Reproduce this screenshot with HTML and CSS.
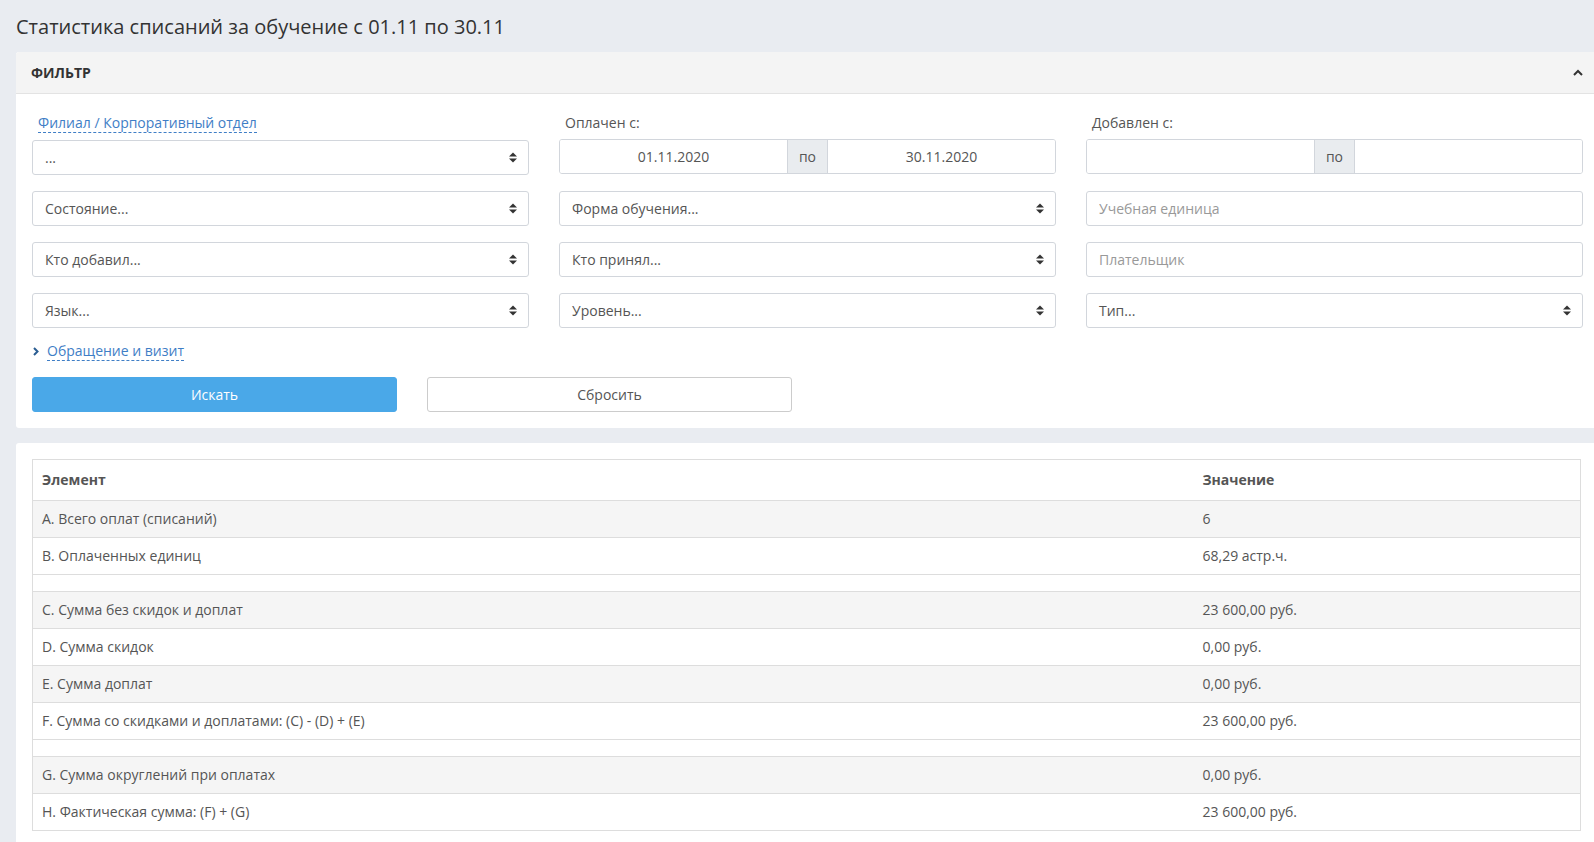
FILE: index.html
```html
<!DOCTYPE html>
<html lang="ru">

<head>
    <meta charset="UTF-8">
    <meta name="viewport" content="width=device-width, initial-scale=1.0">
    <title>Статистика списаний</title>
    <link rel="stylesheet" href="styles.css">
</head>

<body>
    <div class="page">
        <h1 class="page-title">Статистика списаний за обучение с 01.11 по 30.11</h1>

        <div class="panel">
            <div class="panel-heading">
                <span>ФИЛЬТР</span>
                <svg class="collapse-icon" width="10" height="7" viewBox="0 0 10 7">
                    <path d="M1 6 L5 2 L9 6" fill="none" stroke="#333" stroke-width="2"/>
                </svg>
            </div>
            <div class="panel-body">
                <div class="filter-grid">
                    <div class="field">
                        <a class="dashed-link">Филиал / Корпоративный отдел</a>
                        <div class="select">
                            <span>...</span>
                            <svg class="arrows" width="8" height="11" viewBox="0 0 8 11"><path d="M0 4.5 L4 0.5 L8 4.5 Z M0 6.5 L4 10.5 L8 6.5 Z" fill="#333"/></svg>
                        </div>
                    </div>
                    <div class="field">
                        <label>Оплачен с:</label>
                        <div class="input-group">
                            <input class="date" type="text" value="01.11.2020">
                            <span class="addon">по</span>
                            <input class="date" type="text" value="30.11.2020">
                        </div>
                    </div>
                    <div class="field">
                        <label>Добавлен с:</label>
                        <div class="input-group">
                            <input class="date" type="text">
                            <span class="addon">по</span>
                            <input class="date" type="text">
                        </div>
                    </div>

                    <div class="select">
                        <span>Состояние...</span>
                        <svg class="arrows" width="8" height="11" viewBox="0 0 8 11"><path d="M0 4.5 L4 0.5 L8 4.5 Z M0 6.5 L4 10.5 L8 6.5 Z" fill="#333"/></svg>
                    </div>
                    <div class="select">
                        <span>Форма обучения...</span>
                        <svg class="arrows" width="8" height="11" viewBox="0 0 8 11"><path d="M0 4.5 L4 0.5 L8 4.5 Z M0 6.5 L4 10.5 L8 6.5 Z" fill="#333"/></svg>
                    </div>
                    <input class="text-input" type="text" placeholder="Учебная единица">

                    <div class="select">
                        <span>Кто добавил...</span>
                        <svg class="arrows" width="8" height="11" viewBox="0 0 8 11"><path d="M0 4.5 L4 0.5 L8 4.5 Z M0 6.5 L4 10.5 L8 6.5 Z" fill="#333"/></svg>
                    </div>
                    <div class="select">
                        <span>Кто принял...</span>
                        <svg class="arrows" width="8" height="11" viewBox="0 0 8 11"><path d="M0 4.5 L4 0.5 L8 4.5 Z M0 6.5 L4 10.5 L8 6.5 Z" fill="#333"/></svg>
                    </div>
                    <input class="text-input" type="text" placeholder="Плательщик">

                    <div class="select">
                        <span>Язык...</span>
                        <svg class="arrows" width="8" height="11" viewBox="0 0 8 11"><path d="M0 4.5 L4 0.5 L8 4.5 Z M0 6.5 L4 10.5 L8 6.5 Z" fill="#333"/></svg>
                    </div>
                    <div class="select">
                        <span>Уровень...</span>
                        <svg class="arrows" width="8" height="11" viewBox="0 0 8 11"><path d="M0 4.5 L4 0.5 L8 4.5 Z M0 6.5 L4 10.5 L8 6.5 Z" fill="#333"/></svg>
                    </div>
                    <div class="select">
                        <span>Тип...</span>
                        <svg class="arrows" width="8" height="11" viewBox="0 0 8 11"><path d="M0 4.5 L4 0.5 L8 4.5 Z M0 6.5 L4 10.5 L8 6.5 Z" fill="#333"/></svg>
                    </div>
                </div>

                <div class="more">
                    <svg width="6" height="9" viewBox="0 0 6 9"><path d="M1 1 L4.5 4.5 L1 8" fill="none" stroke="#2a5d92" stroke-width="2"/></svg>
                    <a class="dashed-link">Обращение и визит</a>
                </div>

                <div class="buttons">
                    <button class="btn btn-primary">Искать</button>
                    <button class="btn btn-default">Сбросить</button>
                </div>
            </div>
        </div>

        <div class="panel panel-result">
            <table class="stats">
                <thead>
                    <tr>
                        <th class="col-name">Элемент</th>
                        <th>Значение</th>
                    </tr>
                </thead>
                <tbody>
                    <tr class="odd"><td>A. Всего оплат (списаний)</td><td>6</td></tr>
                    <tr><td>B. Оплаченных единиц</td><td>68,29 астр.ч.</td></tr>
                    <tr class="empty"><td></td><td></td></tr>
                    <tr class="odd"><td>C. Сумма без скидок и доплат</td><td>23 600,00 руб.</td></tr>
                    <tr><td>D. Сумма скидок</td><td>0,00 руб.</td></tr>
                    <tr class="odd"><td>E. Сумма доплат</td><td>0,00 руб.</td></tr>
                    <tr><td>F. Сумма со скидками и доплатами: (C) - (D) + (E)</td><td>23 600,00 руб.</td></tr>
                    <tr class="empty"><td></td><td></td></tr>
                    <tr class="odd"><td>G. Сумма округлений при оплатах</td><td>0,00 руб.</td></tr>
                    <tr><td>H. Фактическая сумма: (F) + (G)</td><td>23 600,00 руб.</td></tr>
                </tbody>
            </table>
        </div>
    </div>
</body>
</html>
```

FILE: styles.css
```css
body {
    margin: 0;
    background-color: #e9ecf1;
    font-family: "Open Sans", "Noto Sans", sans-serif;
    font-size: 14px;
    color: #555;
}

.page {
    padding-left: 16px;
}

.page-title {
    margin: 0;
    padding: 15px 0 13px 0;
    font-size: 20px;
    font-weight: normal;
    line-height: 24px;
    color: #333;
}

.panel {
    background-color: #fff;
    border-radius: 3px 0 0 3px;
    margin-bottom: 15px;
}

.panel-heading {
    display: flex;
    align-items: center;
    justify-content: space-between;
    height: 41px;
    padding: 0 11px 0 15px;
    background-color: #f4f4f4;
    border-bottom: 1px solid #e3e3e3;
    border-radius: 3px 0 0 0;
    font-size: 14px;
    font-weight: bold;
    color: #333;
}

.panel-body {
    padding: 19px 13px 16px 16px;
}

.filter-grid {
    display: grid;
    grid-template-columns: repeat(3, 497px);
    column-gap: 30px;
    row-gap: 16px;
}

.field label,
.field .dashed-link {
    display: inline-block;
    line-height: 19px;
    margin-bottom: 7px;
}

.field label {
    margin-left: 6px;
}

.field .dashed-link {
    margin-left: 6px;
}

.dashed-link {
    color: #3f7ec6;
    border-bottom: 1px dashed #3f7ec6;
    cursor: pointer;
}

.select,
.text-input,
.input-group {
    box-sizing: border-box;
    height: 35px;
    border: 1px solid #d2d6dc;
    border-radius: 3px;
    background-color: #fff;
}

.select {
    display: flex;
    align-items: center;
    justify-content: space-between;
    padding: 0 11px 0 12px;
    color: #555;
}

.text-input {
    width: 100%;
    padding: 0 12px;
    font-family: inherit;
    font-size: 14px;
    color: #555;
}

.text-input::placeholder {
    color: #999;
}

.input-group {
    display: flex;
    overflow: hidden;
}

.input-group .date {
    flex: 1;
    min-width: 0;
    border: none;
    text-align: center;
    font-family: inherit;
    font-size: 14px;
    color: #555;
}

.addon {
    width: 39px;
    display: flex;
    align-items: center;
    justify-content: center;
    background-color: #e9ecef;
    border-left: 1px solid #d2d6dc;
    border-right: 1px solid #d2d6dc;
    color: #555;
}

.more {
    display: flex;
    align-items: center;
    gap: 8px;
    margin: 13px 0 16px 1px;
    line-height: 19px;
}

.buttons {
    display: flex;
    gap: 30px;
}

.btn {
    width: 365px;
    height: 35px;
    border-radius: 3px;
    font-family: inherit;
    font-size: 14px;
}

.btn-primary {
    background-color: #4aa8e8;
    border: 1px solid #4aa8e8;
    color: #fff;
}

.btn-default {
    background-color: #fff;
    border: 1px solid #ccc;
    color: #555;
}

.panel-result {
    padding: 16px 13px 16px 16px;
}

.stats {
    width: 1549px;
    border-collapse: collapse;
    border: 1px solid #ddd;
}

.stats th,
.stats td {
    text-align: left;
    padding: 8px 9px;
    line-height: 20px;
    border-top: 1px solid #ddd;
}

.stats th {
    padding: 10px 9px;
    color: #555;
}

.col-name {
    width: 75%;
}

.stats tr.odd td {
    background-color: #f5f5f5;
}

.stats tr.empty td {
    padding: 8px 9px;
    line-height: 0;
}
```
